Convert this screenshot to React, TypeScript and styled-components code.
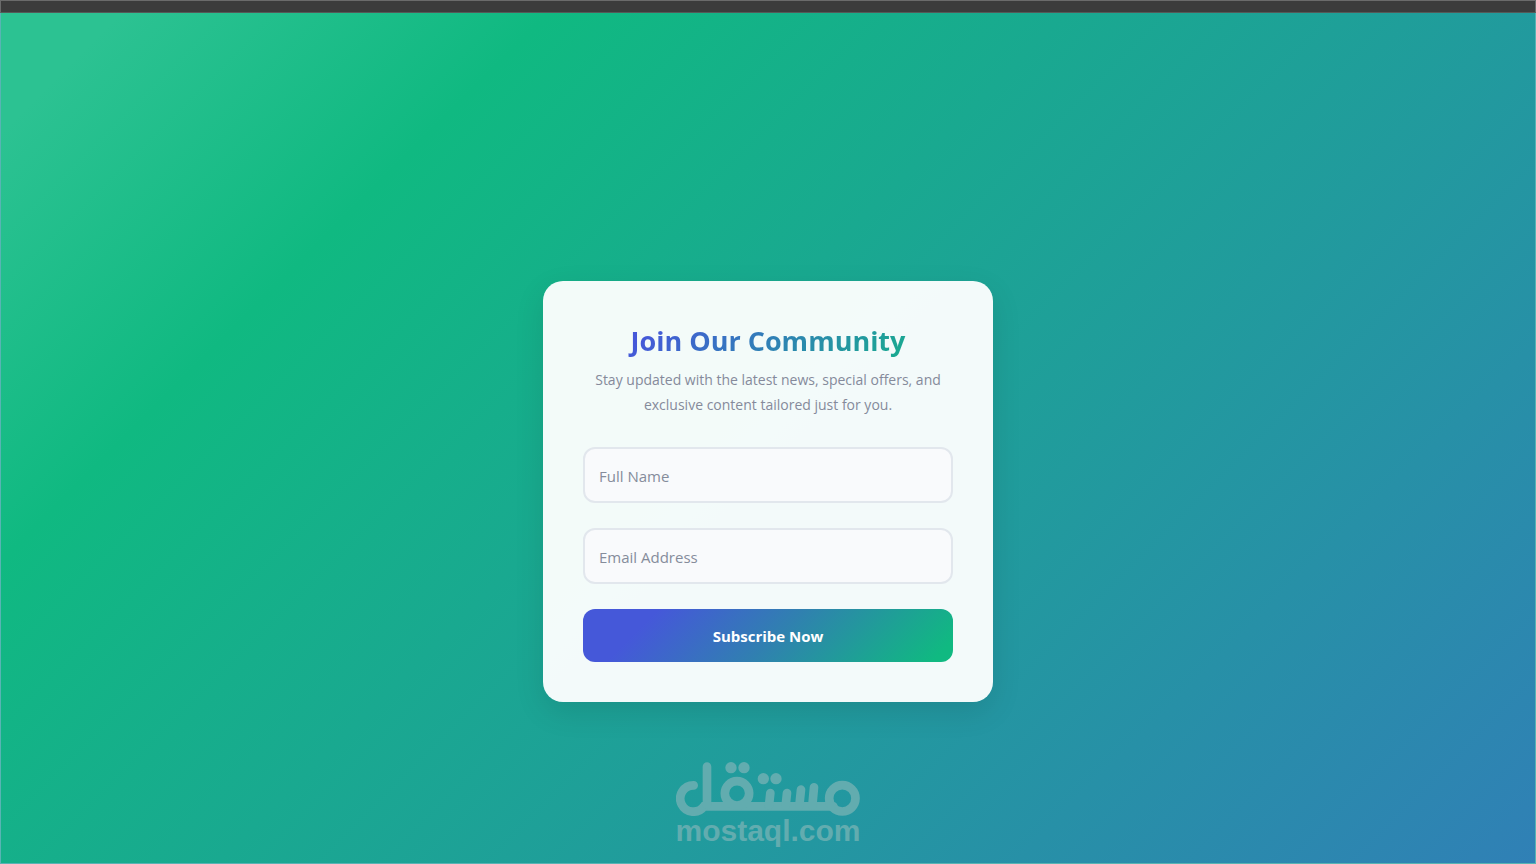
import React from "react";
import styled, { createGlobalStyle } from "styled-components";

const GlobalStyle = createGlobalStyle`
  *, *::before, *::after { box-sizing: border-box; }
  body {
    margin: 0;
    font-family: "Open Sans", "Noto Sans", sans-serif;
  }
`;

const Page = styled.div`
  min-height: 100vh;
  display: flex;
  flex-direction: column;
`;

const TopBar = styled.div`
  height: 13px;
  background: #3c3c3c;
  border: 1px solid #6b6b6b;
  border-bottom-color: #545a58;
`;

const Main = styled.main`
  flex: 1;
  display: flex;
  flex-direction: column;
  align-items: center;
  padding: 268px 20px 17px;
  border: solid #58b4b4;
  border-width: 0 1px 1px;
  background: linear-gradient(135deg, #2cc292 0%, #2cc292 5%, #10b981 23%, #3080b6 100%);
`;

const Card = styled.section`
  width: 100%;
  max-width: 450px;
  padding: 40px;
  border-radius: 20px;
  background: rgba(255, 255, 255, 0.95);
  box-shadow: 0 10px 30px rgba(0, 0, 0, 0.1);
  text-align: center;
`;

const Title = styled.h1`
  margin: 0 0 6px;
  font-size: 27px;
  line-height: 40px;
  font-weight: 700;
  color: transparent;
  background: linear-gradient(135deg, #4558d9 18%, #3080b6 50%, #10b981 100%);
  -webkit-background-clip: text;
  background-clip: text;
`;

const Intro = styled.p`
  margin: 0 0 30px;
  font-size: 14px;
  line-height: 25px;
  color: #858a9b;
`;

const Form = styled.form`
  display: flex;
  flex-direction: column;
  gap: 25px;
`;

const TextField = styled.input`
  width: 100%;
  height: 56px;
  padding: 2px 14px 0;
  border: 2px solid #e2e7ed;
  border-radius: 12px;
  background: #f9fafc;
  font-family: inherit;
  font-size: 15px;
  color: #2d3748;
  outline: none;

  &::placeholder {
    color: #858c9b;
    opacity: 1;
  }
`;

const SubmitButton = styled.button`
  height: 53px;
  border: 0;
  border-radius: 12px;
  background: linear-gradient(135deg, #4558d9 18%, #3080b0 52%, #10b981 95%);
  font-family: inherit;
  font-size: 15px;
  font-weight: 700;
  color: #fff;
  cursor: pointer;
`;

const Brand = styled.div`
  margin-top: 60px;
  display: flex;
  flex-direction: column;
  align-items: center;
  color: #62acaf;
  font-family: "Liberation Sans", sans-serif;
  font-size: 30px;
  line-height: 30px;
  font-weight: 700;
`;

const BrandMark = styled.svg`
  display: block;
  width: 184px;
  height: 54px;
`;

export default function App() {
  return (
    <>
      <GlobalStyle />
      <Page>
        <TopBar />
        <Main>
          <Card>
            <Title>Join Our Community</Title>
            <Intro>
              Stay updated with the latest news, special offers, and exclusive content tailored just for you.
            </Intro>
            <Form onSubmit={(e: React.FormEvent) => e.preventDefault()}>
              <TextField type="text" placeholder="Full Name" aria-label="Full Name" />
              <TextField type="email" placeholder="Email Address" aria-label="Email Address" />
              <SubmitButton type="submit">Subscribe Now</SubmitButton>
            </Form>
          </Card>
          <Brand>
            <BrandMark viewBox="48 36 552 162" fill="none" stroke="currentColor" strokeWidth="26" strokeLinecap="round" aria-hidden="true">
              <path d="M101 106A39.500 39.500 0 1 0 132 169H520" />
              <path d="M141 50V165M331 129L327 167M381 129L377 167M423 119L418 167M462 112L457 167" />
              <circle cx="547" cy="145" r="39.500" />
              <circle cx="231" cy="130" r="36.500" />
              <g fill="currentColor" stroke="none">
                <circle cx="213" cy="53" r="17" />
                <circle cx="252" cy="53" r="17" />
                <circle cx="310" cy="86" r="17" />
                <circle cx="348" cy="86" r="17" />
              </g>
            </BrandMark>
            mostaql.com
          </Brand>
        </Main>
      </Page>
    </>
  );
}
